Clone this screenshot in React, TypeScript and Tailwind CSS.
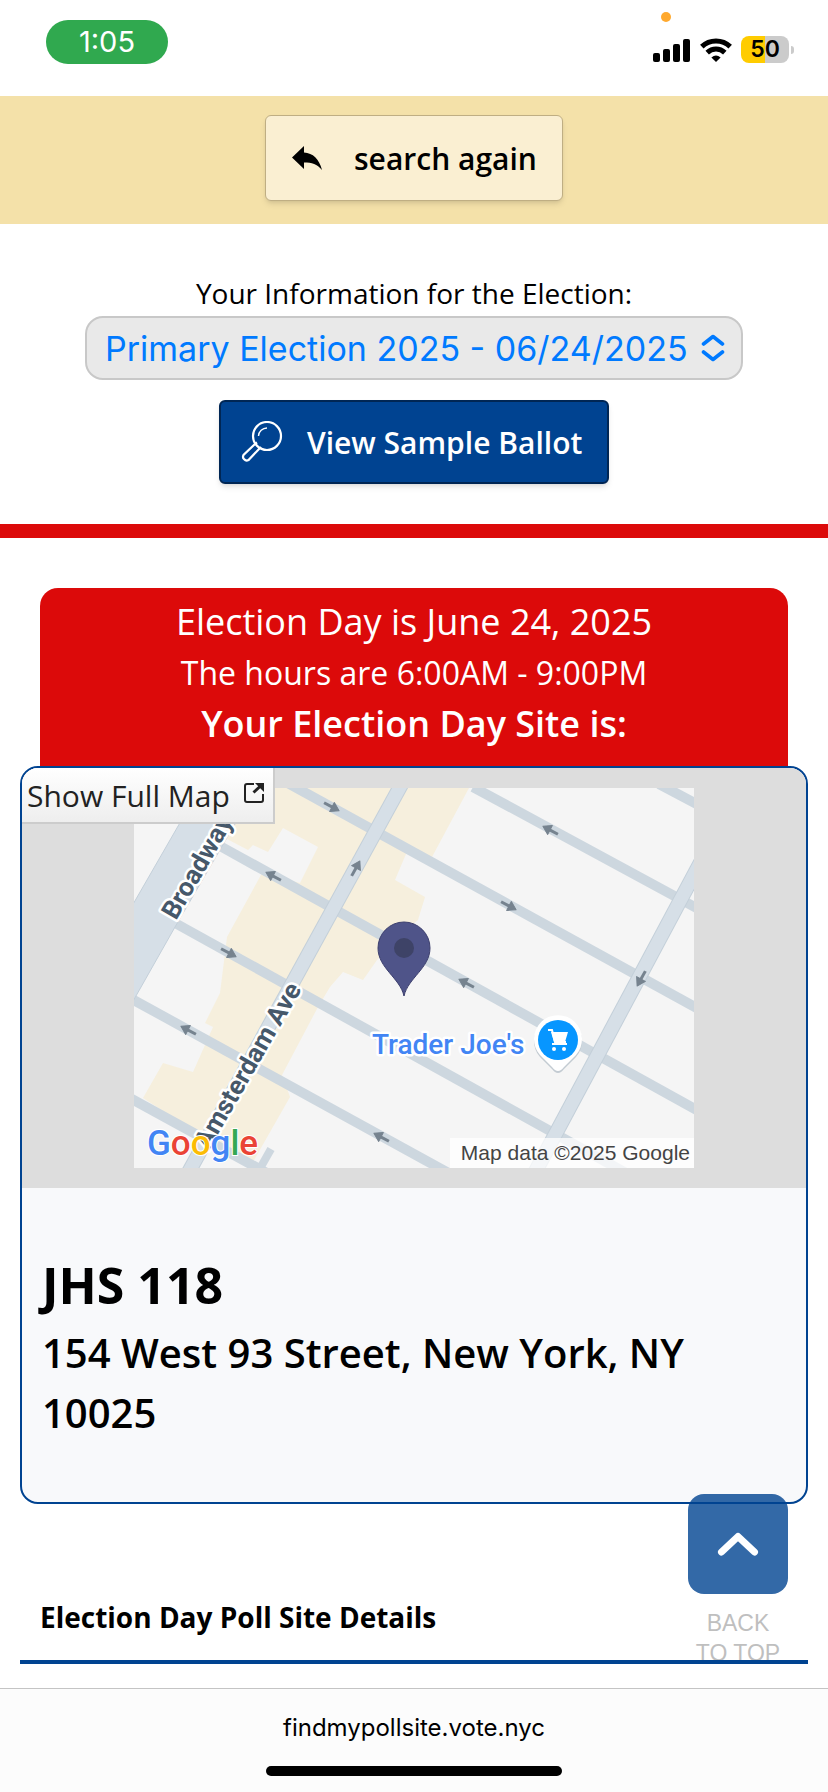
type StreetArrow = {
  x: number
  y: number
  angle: number
}

const streets = [
  'M339 -1 L570 124',
  'M150 -7 L570 224',
  'M86 58 L570 326',
  'M41 135 L510 395',
  'M-4 210 L320 388',
  'M-4 310 L140 389',
  'M525 -4 L570 20',
]

const avenues = ['M271 -10 L52 389', 'M571 66 L398 390']

const arrows: StreetArrow[] = [
  { x: 198, y: 19, angle: 28 },
  { x: 139, y: 88, angle: 208 },
  { x: 95, y: 165, angle: 28 },
  { x: 54, y: 242, angle: 208 },
  { x: 247, y: 349, angle: 208 },
  { x: 222, y: 80, angle: -61 },
  { x: 416, y: 42, angle: 208 },
  { x: 375, y: 118, angle: 28 },
  { x: 332, y: 195, angle: 208 },
  { x: 507, y: 191, angle: 119 },
]

function StatusBar() {
  return (
    <header className="flex h-24 items-start justify-between pl-[46px] pr-[34px]">
      <div className="mt-5 flex h-11 w-[122px] items-center justify-center rounded-full bg-[#30a94f] font-['Inter',sans-serif] text-[29px] text-white">
        1:05
      </div>
      <div className="relative mt-9 flex items-center gap-[9px]">
        <span className="absolute -top-6 left-2 size-[10px] rounded-full bg-[#ffa92e]" />
        <svg className="h-6 w-[38px]" viewBox="0 0 38 24" aria-label="Signal">
          <rect x="0" y="15" width="7" height="9" rx="2" />
          <rect x="10" y="11" width="7" height="13" rx="2" />
          <rect x="20" y="6" width="7" height="18" rx="2" />
          <rect x="30" y="1" width="7" height="23" rx="2" />
        </svg>
        <svg className="h-6 w-8" viewBox="0 0 32 24" fill="none" stroke="#000" strokeWidth="5" aria-label="Wi-Fi">
          <path d="M1.8 8.6 A20.5 20.5 0 0 1 30.2 8.6" />
          <path d="M7.2 14.6 A12.7 12.7 0 0 1 24.8 14.6" />
          <path d="M16 24 L11.4 19.4 Q16 15.8 20.6 19.4 Z" fill="#000" stroke="none" />
        </svg>
        <div className="flex items-center gap-[2px]">
          <div className="flex h-[27px] w-12 items-center justify-center rounded-lg bg-[linear-gradient(90deg,#ffcc00_50%,#cbcbcb_50%)] font-['Inter',sans-serif] text-[23px] font-semibold">
            50
          </div>
          <span className="h-2 w-[3px] rounded-r-full bg-[#cbcbcb]" />
        </div>
      </div>
    </header>
  )
}

function SiteMap() {
  return (
    <svg className="h-[380px] w-[560px]" viewBox="0 0 560 380" role="img" aria-label="Map of the poll site">
      <rect width="560" height="380" fill="#f5f5f5" />
      <path
        fill="#f6efdd"
        d="M118 0 H335 L298 69 L272 66 L261 92 L291 109 L284 132 L262 150 L243 172 L229 192 L209 184 L196 199 L184 219 L148 287 L156 309 L119 374 L100 368 L66 347 L9 310 L29 275 L59 284 L79 239 L71 235 L86 205 L93 149 L128 85 L166 95 L184 59 L149 40 L134 64 L119 57 L114 62 L91 50 Z"
      />
      <g stroke="#cdd7df" strokeWidth="10" fill="none">
        {streets.map((d) => (
          <path key={d} d={d} />
        ))}
        <path d="M137 361 L124 384" strokeWidth="8" />
      </g>
      <path d="M66 0 L-2 118 V215 L41 139 L122 0 Z" fill="#d6dfe7" stroke="#c3cfd9" strokeWidth="1" />
      <g fill="none">
        {avenues.map((d) => (
          <g key={d}>
            <path d={d} stroke="#c3cfd9" strokeWidth="15" />
            <path d={d} stroke="#d6dfe7" strokeWidth="13" />
          </g>
        ))}
      </g>
      {arrows.map((arrow) => (
        <g key={`${arrow.x}-${arrow.y}`} transform={`translate(${arrow.x} ${arrow.y}) rotate(${arrow.angle})`}>
          <path d="M-9 0 H2" stroke="#76838f" strokeWidth="3" />
          <path d="M0 -5 L8 0 L0 5 Z" fill="#76838f" stroke="#76838f" strokeLinejoin="round" />
        </g>
      ))}
      <g
        className="font-['Roboto',sans-serif] font-bold"
        fill="#46586a"
        stroke="#fff"
        strokeWidth="5"
        strokeLinejoin="round"
        paintOrder="stroke"
      >
        <text transform="translate(42 133) rotate(-60)" fontSize="26">Broadway</text>
        <text transform="translate(168 201) rotate(-60)" fontSize="26" textAnchor="end">Amsterdam Ave</text>
        <text x="238" y="266" fontSize="28" className="font-medium" fill="#4285f4">Trader Joe's</text>
      </g>

      <path d="M270 208 C266 190 244 180 244 160 A26 26 0 0 1 296 160 C296 180 274 190 270 208 Z" fill="#4f5489" stroke="#3d406e" />
      <circle cx="270" cy="160" r="10" fill="#3e4367" />

      <path d="M424 285 Q421 285 418 281 L406 269 A24 24 0 1 1 442 269 L430 281 Q427 285 424 285 Z" fill="#c3cbd2" />
      <path d="M424 283 Q421 283 418 279 L406 267 A24 24 0 1 1 442 267 L430 279 Q427 283 424 283 Z" fill="#fff" />
      <circle cx="424" cy="252" r="20" fill="#0796ff" />
      <path d="M414 242 H418 L421 254 H432 M418 256 H433" stroke="#fff" strokeWidth="2" fill="none" />
      <path d="M417 244 H434 L431 254 H420 Z" fill="#fff" />
      <circle cx="420" cy="261" r="2" fill="#fff" />
      <circle cx="430" cy="261" r="2" fill="#fff" />

      <text
        x="13"
        y="367"
        fontSize="35"
        className="font-['Roboto',sans-serif] font-medium"
        stroke="#fff"
        strokeWidth="2"
        paintOrder="stroke"
      >
        <tspan fill="#4285f4">G</tspan>
        <tspan fill="#ea4335">o</tspan>
        <tspan fill="#fbbc05">o</tspan>
        <tspan fill="#4285f4">g</tspan>
        <tspan fill="#34a853">l</tspan>
        <tspan fill="#ea4335">e</tspan>
      </text>
      <rect x="316" y="350" width="244" height="30" fill="#fff" fillOpacity="0.75" />
      <text x="556" y="372" fontSize="21" textAnchor="end" fill="#444" className="font-['Liberation_Sans',sans-serif]">
        Map data ©2025 Google
      </text>
    </svg>
  )
}

function SearchAgain() {
  return (
    <div className="flex justify-center bg-[#f4e1a9] pb-[23px] pt-[19px]">
      <button
        type="button"
        className="flex h-[86px] w-[298px] items-center rounded-md border border-[#bfae83] bg-[#faefd2] pl-[26px] text-[30px] font-semibold shadow-md"
      >
        <svg className="mr-8 h-6 w-[30px]" viewBox="0 0 30 24" aria-hidden="true">
          <path d="M0 11.5 L12 0 V6.5 C21 7 27 13 30 24 C25 18 20 16.5 12 16.5 V23 Z" />
        </svg>
        search again
      </button>
    </div>
  )
}

function ElectionPicker() {
  return (
    <section className="flex flex-col items-center border-b-[14px] border-[#dc0a0a] px-5 pb-10 pt-[47px]">
      <label htmlFor="election" className="mb-px text-[28px] leading-11">
        Your Information for the Election:
      </label>
      <div className="relative w-[658px] max-w-full">
        <select
          id="election"
          className="h-16 w-full appearance-none rounded-[18px] border-2 border-[#c8c8c8] bg-[#e9e9e9] pl-[18px] pr-11 font-['Inter',sans-serif] text-[34px] text-[#007aff]"
        >
          <option>Primary Election 2025 - 06/24/2025</option>
        </select>
        <svg
          className="pointer-events-none absolute right-[18px] top-[18px] h-7 w-6"
          viewBox="0 0 24 28"
          fill="none"
          stroke="#007aff"
          strokeWidth="3.6"
          strokeLinecap="round"
          strokeLinejoin="round"
          aria-hidden="true"
        >
          <path d="M2.5 10 L12 2.5 L21.5 10 M2.500 18 L12 25.500 L21.500 18" />
        </svg>
      </div>
      <button
        type="button"
        className="mt-5 flex h-[84px] w-[390px] items-center rounded-md border-2 border-[#002654] bg-[#004391] pl-5 text-[30px] font-semibold text-white shadow-md"
      >
        <svg className="mr-6 size-[42px]" viewBox="0 0 42 42" fill="none" stroke="#fff" strokeWidth="2.2" aria-hidden="true">
          <circle cx="26" cy="15" r="14" />
          <path d="M17.5 15 A8.5 8.5 0 0 1 26 7" strokeWidth="1.4" />
          <path d="M14 23 L2.5 34 A3.7 3.7 0 0 0 7.5 39 L18.5 27.5 M14 23 L16 21.500 M18.500 27.500 L20 26" />
        </svg>
        View Sample Ballot
      </button>
    </section>
  )
}

function PollSiteCard() {
  return (
    <section className="mx-5 mt-[50px]">
      <div className="mx-5 rounded-t-[18px] bg-[#dc0a0a] pb-4 pt-2 text-center text-white">
        <p className="text-[36px] leading-[52px]">Election Day is June 24, 2025</p>
        <p className="text-[32px] leading-[50px]">The hours are 6:00AM - 9:00PM</p>
        <p className="text-[36px] font-semibold leading-[52px]">Your Election Day Site is:</p>
      </div>
      <div className="overflow-hidden rounded-[18px] border-2 border-[#004391] bg-[#f8f9fb]">
        <div className="relative flex justify-center bg-[#ddd] py-5">
          <SiteMap />
          <button
            type="button"
            className="absolute left-0 top-0 flex h-14 w-[253px] items-center border-b-2 border-r-2 border-[#ccc] bg-linear-to-b from-white to-[#eee] pl-[5px] text-[30px] text-[#222]"
          >
            Show Full Map
            <svg className="mb-1 ml-[14px] size-5" viewBox="0 0 20 20" fill="none" stroke="#222" strokeWidth="2" aria-hidden="true">
              <path d="M10 1 H3 Q1 1 1 3 V17 Q1 19 3 19 H17 Q19 19 19 17 V11" />
              <path d="M9.5 9.5 L16 3.5" strokeWidth="3" />
              <path d="M11 0 H20 V9 Z" fill="#222" stroke="none" />
            </svg>
          </button>
        </div>
        <div className="px-5 pb-[59px] pt-[65px]">
          <h1 className="text-[50px] font-bold leading-[64px]">JHS 118</h1>
          <p className="mt-1.5 text-[40px] font-semibold leading-[60px]">154 West 93 Street, New York, NY 10025</p>
        </div>
      </div>
    </section>
  )
}

function BackToTop() {
  return (
    <a
      href="#top"
      className="absolute bottom-[124px] right-10 flex w-[100px] flex-col items-center text-center font-['Liberation_Sans',sans-serif] text-[23px] leading-[30px] text-[#bfbfbf]"
    >
      <span className="mb-[14px] flex size-[100px] items-center justify-center rounded-2xl bg-[#004391]/80">
        <svg className="h-6 w-[42px]" viewBox="0 0 42 24" fill="none" stroke="#fff" strokeWidth="7" strokeLinecap="round" strokeLinejoin="round" aria-hidden="true">
          <path d="M4.5 20 L21 4.5 L37.5 20" />
        </svg>
      </span>
      <span>BACK</span>
      <span>TO TOP</span>
    </a>
  )
}

function BrowserBar() {
  return (
    <footer className="mt-auto flex flex-col items-center border-t border-[#c4c4c4] bg-[#fcfcfc] pb-4 pt-[23px]">
      <p className="font-['Inter',sans-serif] text-[24px] leading-8">findmypollsite.vote.nyc</p>
      <div className="mt-[22px] h-[10px] w-[296px] rounded-full bg-black" />
    </footer>
  )
}

export default function App() {
  return (
    <div id="top" className="relative flex min-h-screen flex-col bg-white font-['Open_Sans',sans-serif] text-black">
      <StatusBar />
      <SearchAgain />
      <ElectionPicker />
      <PollSiteCard />
      <BackToTop />
      <h2 className="relative mx-5 mb-6 mt-[93px] border-b-4 border-[#004391] pb-[23px] pl-5 text-[28px] font-bold leading-10">
        Election Day Poll Site Details
      </h2>
      <BrowserBar />
    </div>
  )
}
